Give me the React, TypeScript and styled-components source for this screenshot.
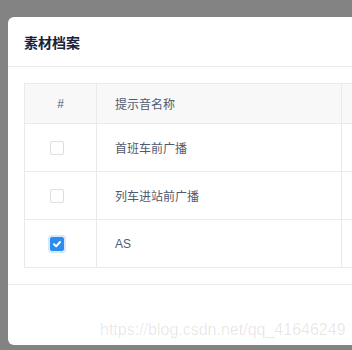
import React from 'react';
import styled, { createGlobalStyle } from 'styled-components';

const GlobalStyle = createGlobalStyle`
  html, body {
    margin: 0;
    padding: 0;
    overflow: hidden;
    background: #838383;
  }
  body {
    font-family: "Liberation Sans", "Noto Sans CJK SC", sans-serif;
  }
`;

const rows = [
  { name: '首班车前广播', checked: false },
  { name: '列车进站前广播', checked: false },
  { name: 'AS', checked: true },
];

const App: React.FC = () => {
  return (
    <Page>
      <GlobalStyle />
      <Modal>
        <Header>素材档案</Header>
        <Body>
          <Table>
            <colgroup>
              <col style={{ width: 72 }} />
              <col style={{ width: 245 }} />
              <col style={{ width: 160 }} />
            </colgroup>
            <thead>
              <tr>
                <Th center>#</Th>
                <Th>提示音名称</Th>
                <Th />
              </tr>
            </thead>
            <tbody>
              {rows.map((r) => (
                <tr key={r.name}>
                  <Td center>
                    <Check checked={r.checked}>
                      {r.checked && (
                        <svg width='10' height='10' viewBox='0 0 10 10'>
                          <path d='M2 5.2 L4.2 7.3 L8 3' fill='none' stroke='#fff' strokeWidth='2' strokeLinecap='round' strokeLinejoin='round' />
                        </svg>
                      )}
                    </Check>
                  </Td>
                  <Td>{r.name}</Td>
                  <Td />
                </tr>
              ))}
            </tbody>
          </Table>
        </Body>
        <Footer />
        <Watermark>https://blog.csdn.net/qq_41646249</Watermark>
      </Modal>
    </Page>
  );
};

const Page = styled.div`
  width: 352px;
  height: 350px;
  padding: 17px 0 0 8px;
  box-sizing: border-box;
  overflow: hidden;
`;

const Modal = styled.div`
  position: relative;
  width: 560px;
  height: 328px;
  background: #ffffff;
  border-radius: 6px;
  display: flex;
  flex-direction: column;
`;

const Header = styled.div`
  height: 50px;
  box-sizing: border-box;
  padding: 0 16px;
  display: flex;
  align-items: center;
  border-bottom: 1px solid #e8eaec;
  font-size: 14px;
  font-weight: 700;
  color: #17233d;
`;

const Body = styled.div`
  padding: 16px;
  border-bottom: 1px solid #e8eaec;
`;

const Table = styled.table`
  border-collapse: collapse;
  table-layout: fixed;
  width: 477px;
  font-size: 12px;
  color: #515a6e;
  border: 1px solid #e8eaec;
`;

const Th = styled.th<{ center?: boolean }>`
  height: 39px;
  padding: 0 18px;
  background: #f8f8f9;
  font-weight: 400;
  text-align: ${(p) => (p.center ? 'center' : 'left')};
  border: 1px solid #e8eaec;
`;

const Td = styled.td<{ center?: boolean }>`
  height: 47px;
  padding: 0 18px;
  text-align: ${(p) => (p.center ? 'center' : 'left')};
  border: 1px solid #e8eaec;
`;

const Check = styled.span<{ checked: boolean }>`
  display: inline-flex;
  align-items: center;
  justify-content: center;
  vertical-align: middle;
  width: 14px;
  height: 14px;
  box-sizing: border-box;
  margin-right: 8px;
  border-radius: 2px;
  border: 1px solid ${(p) => (p.checked ? '#2d8cf0' : '#dcdee2')};
  background: ${(p) => (p.checked ? '#2d8cf0' : '#ffffff')};
  box-shadow: ${(p) => (p.checked ? '0 0 0 2px rgba(45, 140, 240, 0.2)' : 'none')};
`;

const Footer = styled.div`
  flex: 1;
`;

const Watermark = styled.div`
  position: absolute;
  left: 92px;
  top: 304px;
  font-family: "Liberation Sans", Arial, sans-serif;
  font-size: 16px;
  color: rgba(0, 0, 0, 0.1);
  white-space: nowrap;
`;

export default App;
